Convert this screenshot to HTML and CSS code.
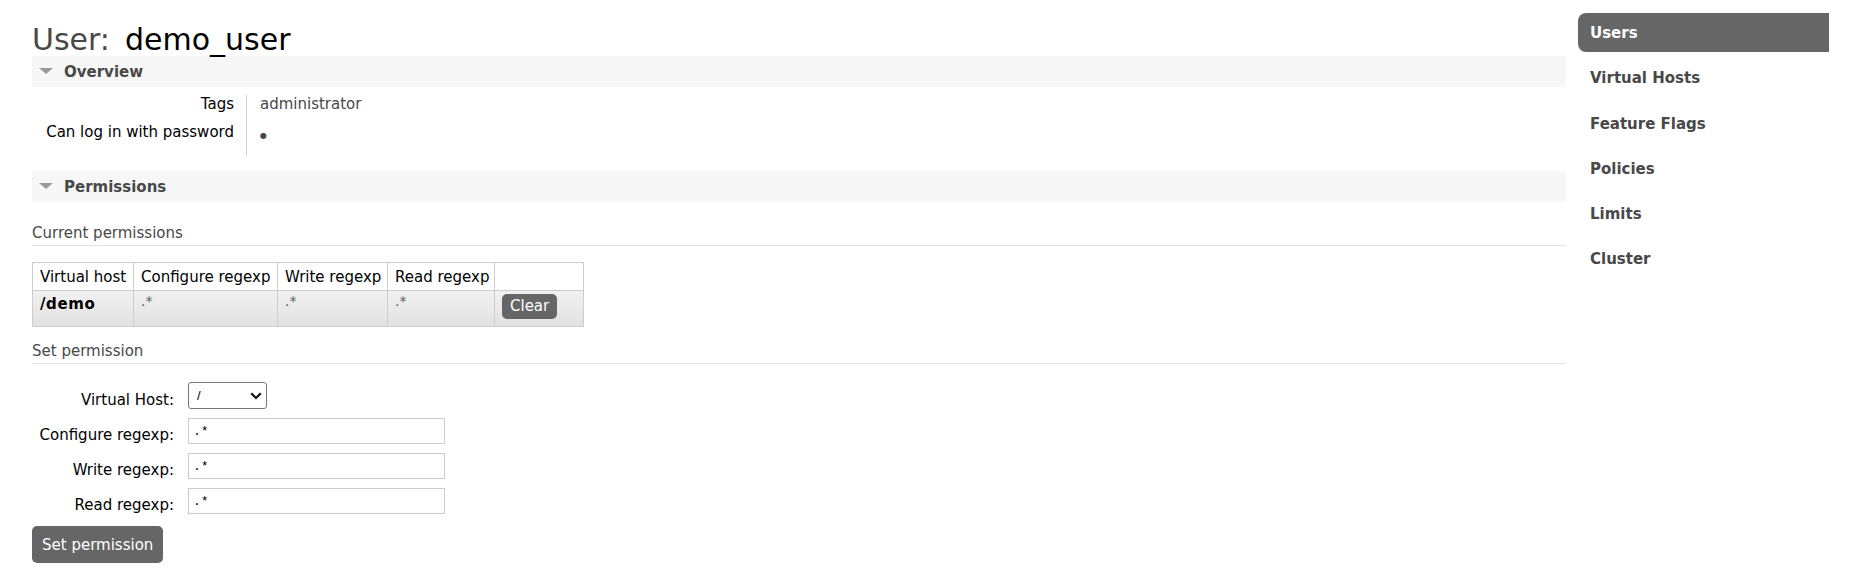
FILE: index.html
```html
<!DOCTYPE html>
<html lang="en">
<head>
<meta charset="utf-8">
<title>User: demo_user</title>
<link rel="stylesheet" href="styles.css">
</head>
<body>
<div class="page">
  <div class="main">
    <h1 class="title">User:<span class="title-name">demo_user</span></h1>

    <h2 class="section-head"><span class="tri"></span>Overview</h2>
    <div class="kv">
      <div class="kv-label">Tags</div>
      <div class="kv-value">administrator</div>
      <div class="kv-label kv-last">Can log in with password</div>
      <div class="kv-value kv-last"><span class="bullet">&#9679;</span></div>
    </div>

    <h2 class="section-head section-gap"><span class="tri"></span>Permissions</h2>
    <h3 class="sub-head">Current permissions</h3>
    <table class="perm-table">
      <colgroup>
        <col class="c1"><col class="c2"><col class="c3"><col class="c4"><col class="c5">
      </colgroup>
      <thead>
        <tr class="head-row">
          <th>Virtual host</th>
          <th>Configure regexp</th>
          <th>Write regexp</th>
          <th>Read regexp</th>
          <th></th>
        </tr>
      </thead>
      <tbody>
        <tr class="body-row">
          <td class="vhost">/demo</td>
          <td class="re">.*</td>
          <td class="re">.*</td>
          <td class="re">.*</td>
          <td class="act"><button class="btn-small" type="button">Clear</button></td>
        </tr>
      </tbody>
    </table>

    <h3 class="sub-head sub-gap">Set permission</h3>
    <form class="perm-form">
      <label class="f-label">Virtual Host:</label>
      <div class="select-wrap">
        <select class="f-select"><option>/</option><option>/demo</option></select>
        <svg class="chev" width="12" height="8" viewBox="0 0 12 8"><path d="M1.2 1.2 L6 6 L10.8 1.2" fill="none" stroke="#111" stroke-width="2.2"/></svg>
      </div>
      <label class="f-label">Configure regexp:</label>
      <input class="f-input" type="text" value=".*">
      <label class="f-label">Write regexp:</label>
      <input class="f-input" type="text" value=".*">
      <label class="f-label">Read regexp:</label>
      <input class="f-input" type="text" value=".*">
    </form>
    <button class="btn-big" type="button">Set permission</button>
  </div>

  <nav class="sidebar">
    <ul class="nav">
      <li><a class="nav-item active" href="#">Users</a></li>
      <li><a class="nav-item" href="#">Virtual Hosts</a></li>
      <li><a class="nav-item" href="#">Feature Flags</a></li>
      <li><a class="nav-item" href="#">Policies</a></li>
      <li><a class="nav-item" href="#">Limits</a></li>
      <li><a class="nav-item" href="#">Cluster</a></li>
    </ul>
  </nav>
</div>
</body>
</html>
```

FILE: styles.css
```css
* { box-sizing: border-box; }

html, body {
  margin: 0;
  padding: 0;
  background: #fff;
}

body {
  font-family: "DejaVu Sans", Verdana, sans-serif;
  font-size: 15px;
  line-height: 18px;
  color: #484848;
}

.page {
  display: flex;
  align-items: flex-start;
  padding-left: 32px;
}

.main {
  width: 1534px;
  flex: none;
}

.title {
  margin: 0;
  padding-top: 23px;
  font-size: 30px;
  line-height: 33px;
  font-weight: normal;
  color: #484848;
}

.title-name {
  color: #000;
  margin-left: 15px;
}

.section-head {
  display: flex;
  align-items: center;
  margin: 0;
  height: 31px;
  padding-left: 7px;
  background: #f7f7f7;
  font-size: 15px;
  font-weight: bold;
  color: #484848;
}

.section-gap {
  margin-top: 15px;
}

.tri {
  width: 0;
  height: 0;
  border-left: 7px solid transparent;
  border-right: 7px solid transparent;
  border-top: 6px solid #9a9a9a;
  margin-right: 11px;
  margin-top: -2px;
}

.kv {
  display: grid;
  grid-template-columns: 215px auto;
  justify-content: start;
  margin-top: 8px;
}

.kv-label {
  text-align: right;
  color: #000;
  padding: 0 12px 10px 0;
  border-right: 1px solid #cfcfcf;
}

.kv-value {
  padding: 0 12px 10px 13px;
  color: #484848;
}

.kv-last {
  padding-bottom: 12px;
}

.bullet {
  font-size: 8px;
  position: relative;
  top: 1px;
  color: #484848;
}

.sub-head {
  margin: 22px 0 0;
  padding-bottom: 3px;
  border-bottom: 1px solid #e2e2e2;
  font-size: 15px;
  line-height: 18px;
  font-weight: normal;
  color: #484848;
}

.sub-gap {
  margin-top: 15px;
}

.perm-table {
  margin-top: 16px;
  border-collapse: collapse;
  table-layout: fixed;
  width: 552px;
}

.c1 { width: 101px; }
.c2 { width: 144px; }
.c3 { width: 110px; }
.c4 { width: 107px; }
.c5 { width: 89px; }

.perm-table th,
.perm-table td {
  border: 1px solid #cdcdcd;
  padding: 0 7px;
  text-align: left;
  white-space: nowrap;
  overflow: hidden;
}

.head-row {
  height: 28px;
}

.perm-table th {
  font-weight: normal;
  color: #000;
  background: #fff;
  vertical-align: middle;
}

.body-row {
  height: 36px;
  background: linear-gradient(#f1f1f1, #e1e1e1);
}

.perm-table td {
  vertical-align: top;
  padding-top: 4px;
}

.vhost {
  font-weight: bold;
  color: #000;
  letter-spacing: 0.6px;
}

.perm-table td.re {
  font-size: 14px;
  color: #5e5e5e;
  padding-top: 1px;
}

.perm-table td.act {
  padding-top: 3px;
}

.btn-small {
  height: 25px;
  padding: 0 8px;
  border: 0;
  border-radius: 5px;
  background: #666;
  color: #fff;
  font-family: "DejaVu Sans", Verdana, sans-serif;
  font-size: 15px;
  line-height: 25px;
}

.perm-form {
  display: grid;
  grid-template-columns: 142px 257px;
  column-gap: 14px;
  row-gap: 9px;
  align-items: center;
  margin-top: 18px;
}

.f-label {
  text-align: right;
  color: #000;
  padding-top: 8px;
  white-space: nowrap;
}

.select-wrap {
  position: relative;
  width: 79px;
  height: 27px;
}

.f-select {
  appearance: none;
  -webkit-appearance: none;
  width: 100%;
  height: 100%;
  border: 1px solid #767676;
  border-radius: 3px;
  background: #fff;
  color: #000;
  padding: 0 0 0 8px;
  font-family: "Liberation Sans", Arial, sans-serif;
  font-size: 13px;
}

.chev {
  position: absolute;
  right: 5px;
  top: 10px;
  pointer-events: none;
}

.f-input {
  width: 257px;
  height: 26px;
  border: 1px solid #cbcbcb;
  padding: 0 4px;
  font-family: "Liberation Mono", "Courier New", monospace;
  font-size: 13px;
  color: #000;
  background: #fff;
  outline: none;
}

.btn-big {
  display: block;
  margin-top: 12px;
  height: 37px;
  padding: 0 10px;
  border: 0;
  border-radius: 5px;
  background: #666;
  color: #fff;
  font-family: "DejaVu Sans", Verdana, sans-serif;
  font-size: 15px;
}

.sidebar {
  width: 251px;
  flex: none;
  margin-left: 12px;
  padding-top: 13px;
}

.nav {
  list-style: none;
  margin: 0;
  padding: 0;
}

.nav-item {
  display: block;
  height: 39px;
  line-height: 40px;
  margin-bottom: 6.3px;
  padding-left: 12px;
  font-weight: bold;
  font-size: 15px;
  color: #484848;
  text-decoration: none;
}

.nav-item.active {
  background: #666;
  color: #fff;
  border-radius: 8px 0 0 8px;
}
```
